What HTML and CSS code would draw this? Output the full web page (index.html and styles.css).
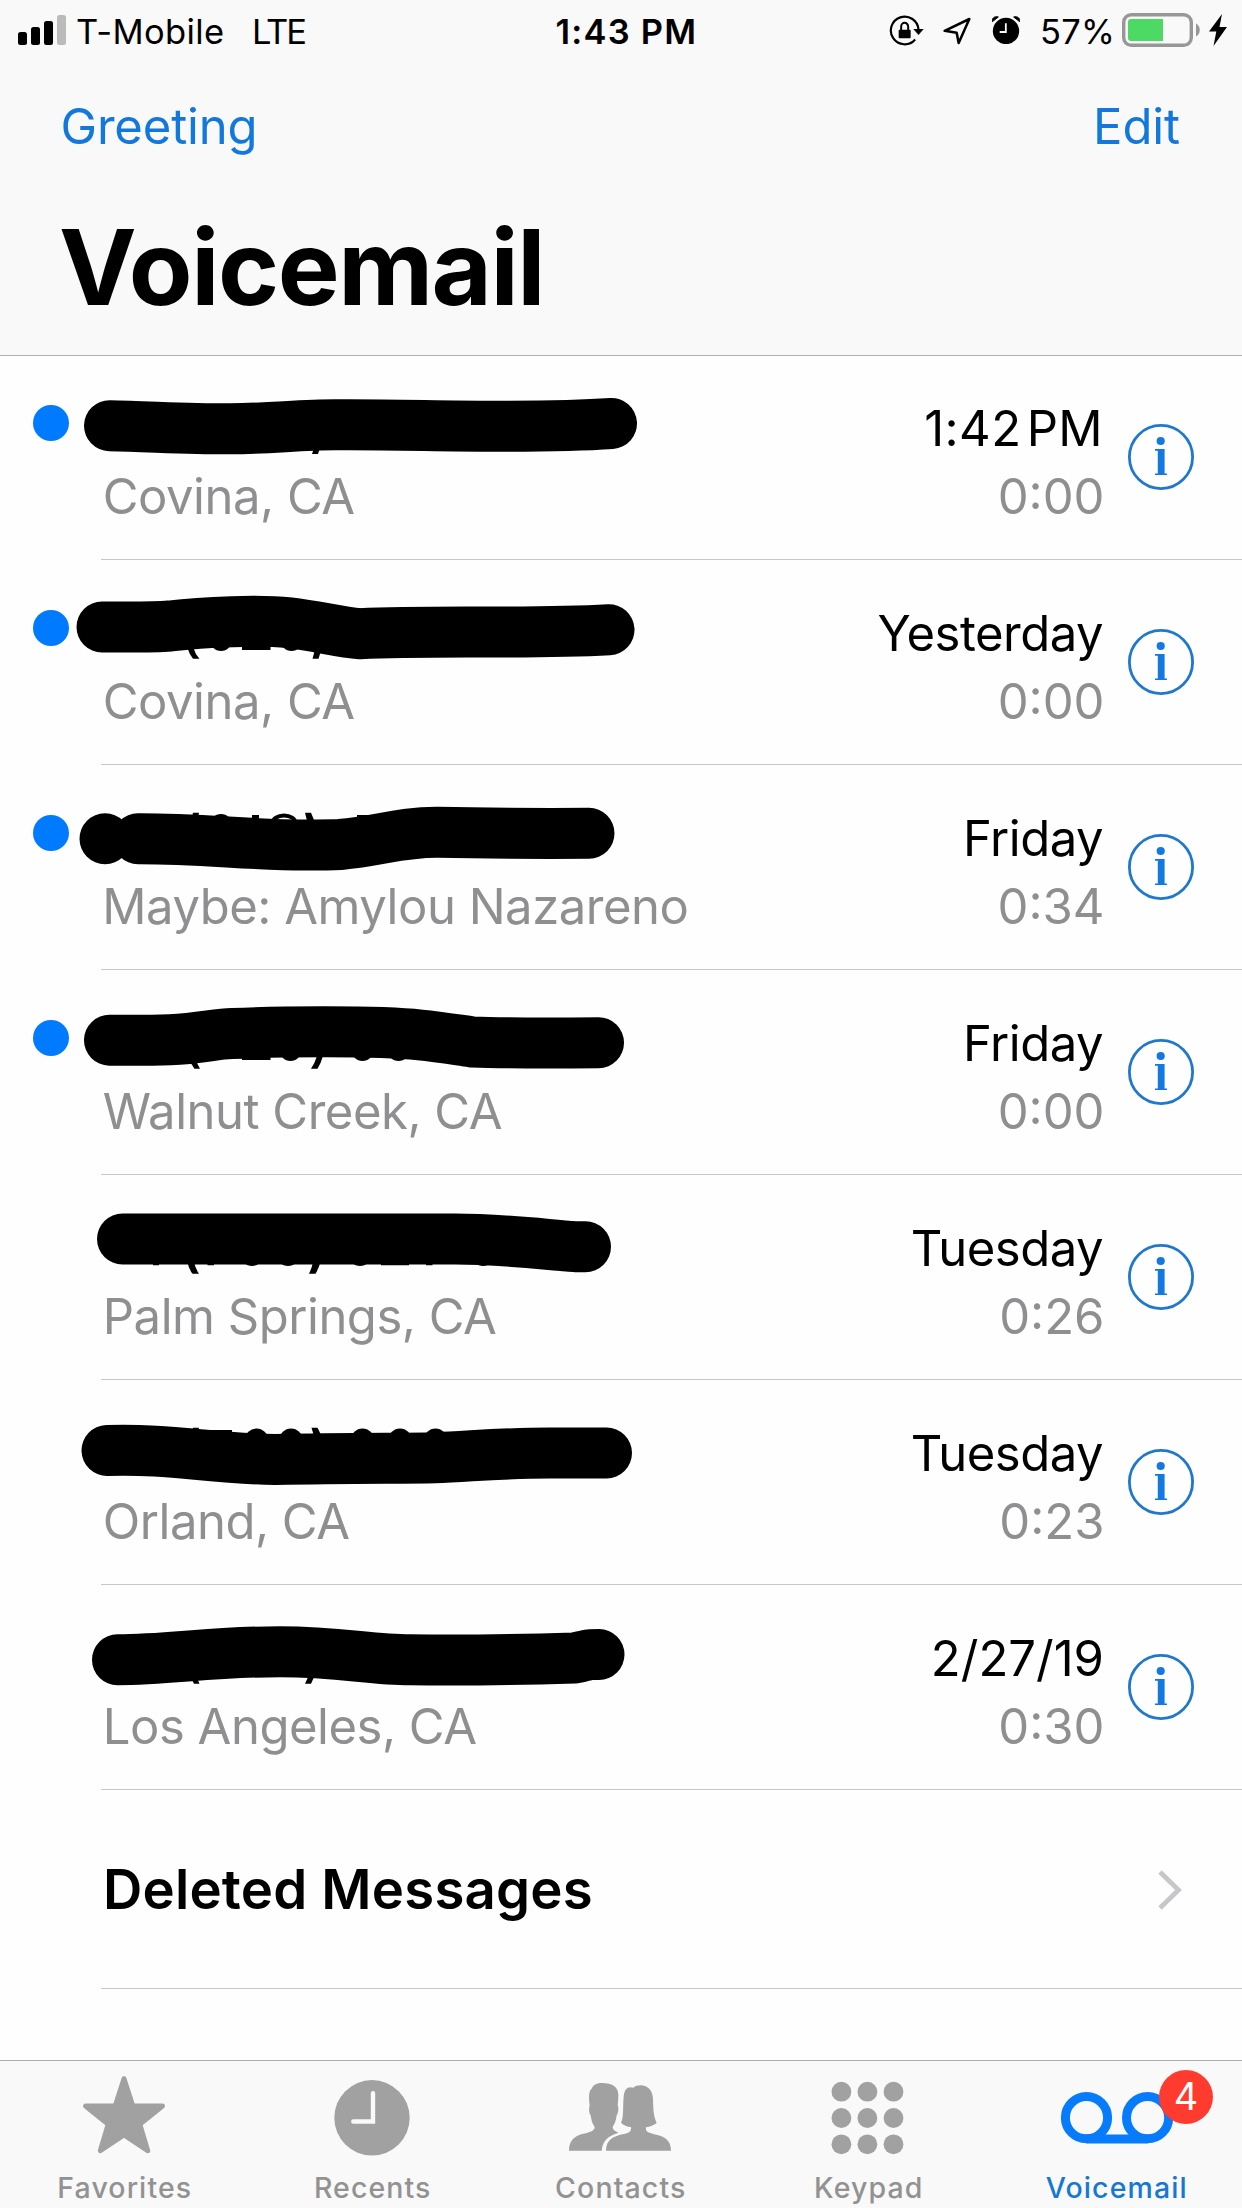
FILE: index.html
```html
<!DOCTYPE html>
<html lang="en">
<head>
<meta charset="utf-8">
<title>Voicemail</title>
<link rel="stylesheet" href="styles.css">
</head>
<body>
<svg class="defs" width="0" height="0" aria-hidden="true">
  <symbol id="info" viewBox="0 0 66 66">
    <circle cx="33" cy="33" r="31.6" fill="none" stroke="#1f78cd" stroke-width="2.8"/>
    <circle cx="32.7" cy="17" r="4.1" fill="#1278e2"/>
    <path d="M27 25h9.6v24.4h2.4V51H27v-1.6h2.8V26.8H27z" fill="#1278e2"/>
  </symbol>
</svg>
<div class="phone">
  <header class="header">
    <div class="status">
      <div class="status-left">
        <svg class="signal" width="48" height="30" viewBox="0 0 48 30">
          <rect x="0" y="17" width="9" height="13" rx="2.5"/>
          <rect x="13" y="12" width="9" height="18" rx="2.5"/>
          <rect x="26" y="6" width="9" height="24" rx="2.5"/>
          <rect x="39" y="0" width="9" height="30" rx="2.5" fill="#bbb"/>
        </svg>
        <span class="carrier">T-Mobile</span>
        <span class="network">LTE</span>
      </div>
      <div class="clock">1:43 PM</div>
      <div class="status-right">
        <svg class="lock" width="35" height="32" viewBox="28 41 105 96">
          <path d="M106.500 117.500A41.500 41.500 0 1 1 116.500 88" fill="none" stroke="#000" stroke-width="6.500"/>
          <path d="M101 86h31l-15.500 18z"/>
          <rect x="57" y="88" width="36" height="26" rx="3"/>
          <path d="M64.500 90V79a10.500 11.500 0 0 1 21 0v11" fill="none" stroke="#000" stroke-width="6"/>
        </svg>
        <svg class="location" width="28" height="28" viewBox="190 50 84 84">
          <path d="M195 91.500L269 56L237 128L231 97.500Z" fill="none" stroke="#000" stroke-width="7.500" stroke-linejoin="round"/>
        </svg>
        <svg class="alarm" width="28" height="28" viewBox="336 47 84 84">
          <circle cx="378" cy="92" r="39.500"/>
          <path d="M337 64C335 53 344 47 355 50ZM419 64C421 53 412 47 401 50Z" stroke="#000" stroke-width="3" stroke-linejoin="round"/>
          <path d="M377.500 69v26H359" fill="none" stroke="#f9f9f9" stroke-width="5.500"/>
        </svg>
        <span class="percent">57%</span>
        <svg class="battery" width="78" height="34" viewBox="0 0 78 34">
          <rect x="1.700" y="1.700" width="67.600" height="30.600" rx="7.500" fill="#f9f9f9" stroke="#979797" stroke-width="3.400"/>
          <path d="M9 6h32v22H9a3 3 0 0 1-3-3V9a3 3 0 0 1 3-3z" fill="#4cd964"/>
          <path d="M74 10.500c5 2.500 5 10.500 0 13z" fill="#979797"/>
        </svg>
        <svg class="bolt" width="18" height="32" viewBox="0 0 18 32"><path d="M13 0L0 17.500h7.300L4.500 32L18 13H10.500z"/></svg>
      </div>
    </div>
    <nav class="actions"><a class="greeting">Greeting</a><a class="edit">Edit</a></nav>
    <h1 class="title">Voicemail</h1>
  </header>

  <main class="list">
    <article class="row">
      <span class="lead"><i class="dot"></i></span>
      <div class="caller">
        <svg class="scribble" viewBox="102 39 560 68"><path class="ink" d="M109.500 70.700C150 71.500 190 74 230 73.800C270 73.600 300 69.800 335 69.800C390 69.300 450 71.500 500 71.200C550 71.200 590 70 611.500 68.500"/><path d="M312 99l3-9h6l-3 9z"/></svg>
        <p class="place">Covina, CA</p>
      </div>
      <div class="when"><p class="day time">1:42 PM</p><p class="length">0:00</p></div>
      <svg class="info"><use href="#info"/></svg>
    </article>
    <article class="row">
      <span class="lead"><i class="dot"></i></span>
      <div class="caller">
        <svg class="scribble" viewBox="102 39 560 68"><path class="ink" d="M102 67C130 67 152 67.500 170 66C205 61.500 260 60 290 62.800C318 66 340 72.500 360 73.700C400 72 450 72.200 490 72C540 72 585 71 609 69.700"/><path d="M187.500 88h6q1.500 6 6 10.700h-6.500q-4-5-5.500-10.700zM315 86h7q-1.500 7-3.500 12.700h-6q2-6 2.500-12.700zM242 80h28.500v10H242z"/><ellipse cx="221" cy="80" rx="11" ry="11"/><ellipse cx="291.500" cy="80" rx="11" ry="11"/></svg>
        <p class="place">Covina, CA</p>
      </div>
      <div class="when"><p class="day">Yesterday</p><p class="length">0:00</p></div>
      <svg class="info"><use href="#info"/></svg>
    </article>
    <article class="row">
      <span class="lead"><i class="dot"></i></span>
      <div class="caller">
        <svg class="scribble" viewBox="102 39 560 68"><path class="ink" d="M105 73.700h.1M138 73.700C200 73.500 250 80 305 80C320 80 330 80 340 79.500C380 76 400 67 438 67.300C480 68.300 540 68.500 589 68.300"/><path d="M193 47.700h6l-2 10h-6zM252 50h7v10h-7zM305 47.700h6l5 12h-8zM357 50h12l-3 8h-9z"/><ellipse cx="221" cy="60" rx="11" ry="11"/><path d="M272.500 58a11.500 7.500 0 0 1 23 0" fill="none" stroke="#000" stroke-width="4"/></svg>
        <p class="place wide">Maybe: Amylou Nazareno</p>
      </div>
      <div class="when"><p class="day">Friday</p><p class="length">0:34</p></div>
      <svg class="info"><use href="#info"/></svg>
    </article>
    <article class="row">
      <span class="lead"><i class="dot"></i></span>
      <div class="caller">
        <svg class="scribble" viewBox="102 39 560 68"><path class="ink" d="M109.500 70.200C130 70.500 150 70.500 170 69.700C200 68.500 215 64 232 63.500C265 62 375 60 420 65C440 67 458 70 472 71.900C500 73 560 73 598.500 72.700"/><path d="M189.500 88h6q1.500 6 4.500 10.700h-5.500q-4-5-5-10.700zM317 86h6q-2 7-5.500 12.700h-6.500q4-6 6-12.700zM242 80h28.500v10H242z"/><ellipse cx="290.500" cy="80" rx="11" ry="11"/><ellipse cx="362.500" cy="80" rx="11" ry="11"/><ellipse cx="398.500" cy="80" rx="11" ry="11"/></svg>
        <p class="place">Walnut Creek, CA</p>
      </div>
      <div class="when"><p class="day">Friday</p><p class="length">0:00</p></div>
      <svg class="info"><use href="#info"/></svg>
    </article>
    <article class="row">
      <span class="lead"></span>
      <div class="caller">
        <svg class="scribble" viewBox="102 39 560 68"><path class="ink" d="M122.500 64H455C500 64 540 69 575 71.700H585.500"/><path d="M153 80h6v10.300h-6zM187.500 87h6.500q1.500 7 5 11.700h-6.500q-4-5-5-11.700zM207.500 80h6.500v10.300h-6.500zM313 87h7.500q-2 7-5 11.700h-6.500q3-6 4-11.700zM381 80h28v10.300h-28zM426 80h6.500v10.300H426z"/><ellipse cx="252" cy="80" rx="11" ry="11"/><ellipse cx="288" cy="80" rx="11" ry="11"/><ellipse cx="360" cy="80" rx="11" ry="11"/><ellipse cx="483" cy="80" rx="11" ry="11"/></svg>
        <p class="place">Palm Springs, CA</p>
      </div>
      <div class="when"><p class="day">Tuesday</p><p class="length">0:26</p></div>
      <svg class="info"><use href="#info"/></svg>
    </article>
    <article class="row">
      <span class="lead"></span>
      <div class="caller">
        <svg class="scribble" viewBox="102 39 560 68"><path class="ink" d="M107 70.500C170 68.500 210 78.500 275 79.500C350 77.700 400 78.500 435 77.700C470 76.500 500 73 550 73H606.500"/><path d="M193 47.700h6l-2 8h-6zM203 50h29v8h-29zM311.500 47.700h6l5 10h-8z"/><ellipse cx="256.500" cy="60" rx="11.500" ry="11.500"/><ellipse cx="291" cy="60" rx="11.500" ry="11.500"/><ellipse cx="362.500" cy="60" rx="11.500" ry="11.500"/><ellipse cx="400" cy="60" rx="11.500" ry="11.500"/><ellipse cx="435.500" cy="60" rx="11.500" ry="11.500"/></svg>
        <p class="place">Orland, CA</p>
      </div>
      <div class="when"><p class="day">Tuesday</p><p class="length">0:23</p></div>
      <svg class="info"><use href="#info"/></svg>
    </article>
    <article class="row">
      <span class="lead"></span>
      <div class="caller">
        <svg class="scribble" viewBox="102 39 560 68"><path class="ink" d="M117.500 74.700C170 74.700 210 66.700 280 66.700C340 66.700 370 74.700 410 74.700C460 75.500 540 74 575 73C590 69.500 588 69.500 599 69.500"/><path d="M191 93h6l2.500 5.700h-5.500zM309 90h6l-4 8.700h-6z"/></svg>
        <p class="place">Los Angeles, CA</p>
      </div>
      <div class="when"><p class="day numeric">2/27/19</p><p class="length">0:30</p></div>
      <svg class="info"><use href="#info"/></svg>
    </article>
    <div class="deleted">
      <span>Deleted Messages</span>
      <svg width="25" height="40" viewBox="0 0 25 40"><path d="M2 2L20.500 20L2 38" fill="none" stroke="#c7c7cb" stroke-width="4.800"/></svg>
    </div>
  </main>

  <footer class="tabs">
    <div class="tab">
      <svg viewBox="0 0 248 108"><path d="M124 17.700L132.800 45H162.500L139.800 63.300L147.700 89.700L124 74L100.300 89.700L108.200 63.300L85.500 45H115.200Z" stroke="#a1a1a1" stroke-width="5" stroke-linejoin="round"/></svg>
      <span>Favorites</span>
    </div>
    <div class="tab">
      <svg viewBox="0 0 248 108"><circle cx="124" cy="56.800" r="37.700"/><path d="M105.300 60.500H125V32.300" fill="none" stroke="#f9f9f9" stroke-width="4.400" stroke-linecap="round"/></svg>
      <span>Recents</span>
    </div>
    <div class="tab">
      <svg viewBox="0 0 248 108"><g transform="translate(54 -1) scale(.3333)"><path d="M57 272C57 240 75 227 100 221C122 216 134 212 134 200C126 192 124 178 122 166C117 160 116 145 119 137C116 110 116 92 125 86C130 73 142 69 156 69C185 69 205 80 205 105C205 118 204 128 203 135C207 145 205 160 200 166C198 182 194 192 188 200C188 210 196 213 206 218C175 228 158 240 155 272Z"/><path d="M168 272C168 240 190 228 222 222C240 218 244 214 243 201C232 200 220 196 213 188C222 170 218 140 221 110C223 85 235 78 250 83C262 73 285 73 296 85C311 98 309 120 310 140C310 160 314 175 320 189C312 196 300 200 288 202C286 214 292 217 310 222C345 228 363 242 363 272Z"/></g></svg>
      <span>Contacts</span>
    </div>
    <div class="tab">
      <svg viewBox="0 0 248 108"><circle cx="97.400" cy="30.700" r="9.900"/><circle cx="123.400" cy="30.700" r="9.900"/><circle cx="149.500" cy="30.700" r="9.900"/><circle cx="97.400" cy="57" r="9.900"/><circle cx="123.400" cy="57" r="9.900"/><circle cx="149.500" cy="57" r="9.900"/><circle cx="97.400" cy="83.300" r="9.900"/><circle cx="123.400" cy="83.300" r="9.900"/><circle cx="149.500" cy="83.300" r="9.900"/></svg>
      <span>Keypad</span>
    </div>
    <div class="tab active">
      <svg viewBox="0 0 248 108"><g fill="none" stroke="#067bfb" stroke-width="9"><circle cx="94.500" cy="56.700" r="21.100"/><circle cx="155.600" cy="56.700" r="21.100"/><path d="M94.500 77.900h61.100"/></g></svg>
      <span>Voicemail</span>
      <b class="badge">4</b>
    </div>
  </footer>
</div>
</body>
</html>
```
FILE: styles.css
```css
* { box-sizing: border-box; }
body { margin: 0; background: #fefefe; font-family: Inter, "Liberation Sans", sans-serif; color: #000; }
p, h1 { margin: 0; }
svg { display: block; flex: none; }
.defs { position: absolute; }
.phone { width: 1242px; height: 2208px; display: flex; flex-direction: column; overflow: hidden; }

.header { height: 356px; background: #f9f9f9; border-bottom: 1px solid #b0b0b2; flex: none; }
.status { display: grid; grid-template-columns: 555.500px 333.500px auto; height: 62px; line-height: 64px; font-size: 34.500px; white-space: nowrap; }
.status-left, .status-right { display: flex; }
.status-left { padding-left: 18px; }
.signal { margin-top: 15px; }
.carrier { margin-left: 10px; letter-spacing: .4px; }
.network { margin-left: 27.500px; letter-spacing: -2.200px; }
.clock { font-weight: 600; letter-spacing: 1.200px; }
.lock { margin-top: 14px; }
.location { margin: 17px 0 0 19px; }
.alarm { margin: 16px 0 0 21px; }
.percent { margin-left: 20px; width: 82px; letter-spacing: .2px; }
.battery { margin-top: 13px; }
.bolt { margin: 14px 0 0 9px; }

.actions { display: flex; justify-content: space-between; height: 128px; line-height: 130px; padding: 0 62px 0 60.500px; font-size: 49px; color: #1278dd; }
.greeting { letter-spacing: -.17px; }
.edit { letter-spacing: -.1px; }
.title { padding-left: 59px; font-size: 104px; font-weight: 700; line-height: 154px; letter-spacing: -1.450px; }

.list { flex: 1; margin-top: -1px; }
.row { display: flex; height: 205px; padding-top: 39px; background: linear-gradient(#c8c7cc, #c8c7cc) 101px 204px / 1141px 1px no-repeat; font-size: 49px; line-height: 68px; }
.lead { width: 102px; padding: 11px 0 0 33px; flex: none; }
.dot { display: block; width: 36px; height: 36px; border-radius: 50%; background: #007aff; }
.caller { flex: 1; }
.scribble { width: 560px; height: 68px; overflow: visible; }
.ink { fill: none; stroke: #000; stroke-width: 51px; stroke-linecap: round; stroke-linejoin: round; }
.place { padding: 1px 0 0 .8px; color: #8f8f92; letter-spacing: -.48px; white-space: nowrap; }
.place.wide { margin-left: -.5px; }
.when { padding-top: 1px; text-align: right; white-space: nowrap; }
.day { letter-spacing: -.5px; }
.day.time { letter-spacing: .4px; word-spacing: -9px; }
.day.numeric { letter-spacing: 0; margin-right: -1px; }
.length { color: #8f8f92; margin-right: -1.500px; }
.info { width: 66px; height: 66px; margin: 30px 48px 0 25px; }
.deleted { display: flex; justify-content: space-between; height: 199px; line-height: 198px; padding: 0 59px 0 103px; font-size: 54.500px; font-weight: 600; letter-spacing: .2px; background: linear-gradient(#c8c7cc, #c8c7cc) 101px 198px / 1141px 1px no-repeat; }
.deleted svg { margin-top: 80px; }

.tabs { flex: none; display: flex; height: 148px; padding-right: 2px; background: #f9f9f9; border-top: 1px solid #acacae; }
.tab { position: relative; width: 248px; text-align: center; color: #929292; fill: #a1a1a1; font-size: 28.500px; font-weight: 500; line-height: 38px; letter-spacing: 1.100px; }
.tab > svg { width: 248px; height: 108px; }
.tab > span { padding-left: 1.500px; }
.tab.active { color: #1678d3; }
.badge { position: absolute; left: 167px; top: 9px; width: 54px; height: 54px; border-radius: 50%; background: #ff3b30; color: #fff; font-size: 38px; font-weight: 400; line-height: 53px; letter-spacing: 0; }
```
